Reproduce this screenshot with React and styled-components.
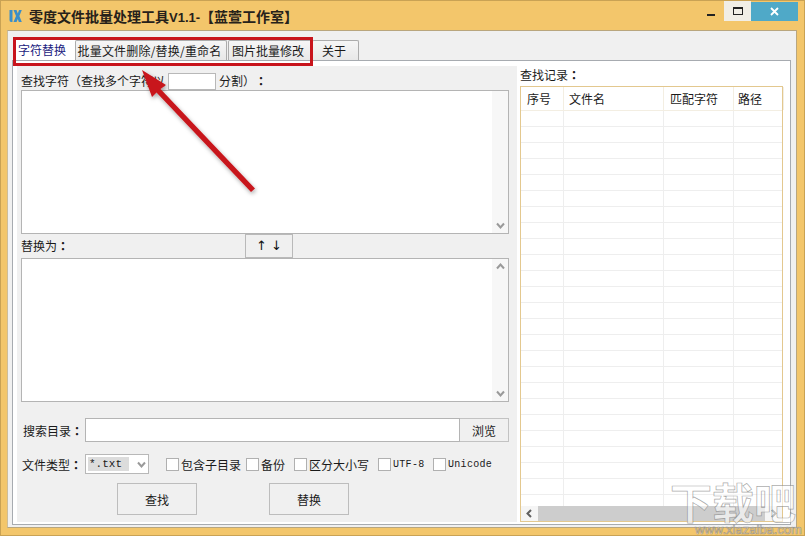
import React from "react";
import styled, { createGlobalStyle } from "styled-components";

const Global = createGlobalStyle`
  html, body { margin: 0; padding: 0; background: #f3c66b; }
  * { box-sizing: border-box; }
  body { font-family: "Noto Sans CJK SC", "Liberation Sans", sans-serif; font-size: 12px; color: #1a1a1a; }
`;

const Frame = styled.div`
  position: relative;
  width: 805px;
  height: 536px;
  overflow: hidden;
  display: flex;
  flex-direction: column;
  background: #f3c66b;
  border: 1px solid #c9a254;
`;
const TitleBar = styled.div`
  flex: 0 0 29px;
  display: flex;
  align-items: flex-start;
  padding-left: 8px;
`;
const Logo = styled.svg`
  width: 13px;
  height: 14px;
  margin-top: 8px;
`;
const Title = styled.div`
  margin: 5px 0 0 7px;
  font-size: 14px;
  line-height: 20px;
  font-weight: 700;
  color: #26211a;
  white-space: nowrap;
`;
const Latin = styled.span`
  font-family: "Liberation Sans", sans-serif;
  font-size: 13px;
`;
const WinButtons = styled.div`
  margin-left: auto;
  margin-right: 6px;
  display: flex;
  align-items: flex-start;
`;
const WinBtn = styled.div`
  width: ${(p) => p.$w}px;
  height: ${(p) => p.$h}px;
  margin-top: ${(p) => 21 - p.$h - 1}px;
  background: ${(p) => p.$bg};
  display: flex;
  align-items: center;
  justify-content: center;
`;
const MinGlyph = styled.div`
  width: 8px;
  height: 2px;
  background: #222;
  margin-top: 8px;
`;
const MaxGlyph = styled.div`
  width: 10px;
  height: 8px;
  border: 1px solid #222;
  border-top-width: 2px;
`;
const Client = styled.div`
  flex: 1;
  min-height: 0;
  margin: 0 7px 7px 6px;
  background: #f0f0f0;
  border: 1px solid #b9a67e;
  border-left-color: #cdbd99;
  padding: 9px 5px 2px 4px;
  display: flex;
  flex-direction: column;
`;
const TabBar = styled.div`
  flex: 0 0 20px;
  min-height: 0;
  display: flex;
  align-items: flex-end;
  padding-left: 1px;
`;
const Tab = styled.div`
  height: ${(p) => (p.$active ? 22 : 20)}px;
  width: ${(p) => p.$w}px;
  margin-right: ${(p) => p.$gap || 0}px;
  padding-right: ${(p) => p.$shift || 0}px;
  display: flex;
  align-items: center;
  justify-content: center;
  flex: 0 0 auto;
  background: ${(p) => (p.$active ? "#fff" : "linear-gradient(#f6f6f6, #e8e8e8)")};
  border: ${(p) => (p.$active ? "none" : "1px solid #acacac")};
  border-bottom: none;
  border-radius: 2px 2px 0 0;
  color: ${(p) => (p.$active ? "#1c1c80" : "#1a1a1a")};
  font-size: 12px;
  letter-spacing: ${(p) => p.$track || 0}px;
  white-space: nowrap;
`;
const TabPanel = styled.div`
  flex: 1;
  min-height: 0;
  display: flex;
  background: #fff;
  border: 1px solid #a7abb0;
  padding: 5px 0 2px 4px;
`;
const LeftPanel = styled.div`
  width: 500px;
  background: #f0f0f0;
  padding: 0 8px 0 4px;
  display: flex;
  flex-direction: column;
`;
const FindRow = styled.div`
  flex: 0 0 24px;
  display: flex;
  align-items: flex-end;
  line-height: 18px;
  white-space: nowrap;
`;
const Wide = styled.span`
  font-family: "Noto Sans CJK TC", "Noto Sans CJK SC", sans-serif;
  font-weight: 700;
`;
const Paren = styled.span`
  display: inline-block;
  width: 12px;
  text-align: right;
`;
const SepInput = styled.div`
  width: 48px;
  height: 17px;
  margin: 0 3px;
  background: #fff;
  border: 1px solid #b8b8b8;
`;
const TextBox = styled.div`
  flex: 0 0 144px;
  background: #fff;
  border: 1px solid #b4b4b4;
  display: flex;
  justify-content: flex-end;
`;
const VScroll = styled.div`
  width: 16px;
  background: #f7f7f7;
  display: flex;
  flex-direction: column;
  justify-content: space-between;
  align-items: center;
  padding: 3px 0;
`;
const Chevron = styled.svg`
  width: 9px;
  height: 9px;
  display: block;
`;
const MidRow = styled.div`
  flex: 0 0 24px;
  display: flex;
  align-items: center;
  line-height: 18px;
`;
const MidLabel = styled.div`
  width: 224px;
`;
const SwapBtn = styled.div`
  width: 48px;
  height: 24px;
  border: 1px solid #b9b9b9;
  background: #f0f0f0;
  display: flex;
  align-items: center;
  justify-content: center;
  gap: 4px;
  font-family: "DejaVu Sans", sans-serif;
  font-size: 13px;
  color: #111;
`;
const DirRow = styled.div`
  margin-top: 16px;
  flex: 0 0 24px;
  display: flex;
  align-items: center;
  padding-left: 2px;
`;
const FieldLabel = styled.div`
  width: 62px;
  white-space: nowrap;
`;
const DirInput = styled.div`
  flex: 1;
  height: 24px;
  background: #fff;
  border: 1px solid #b4b4b4;
`;
const BrowseBtn = styled.div`
  width: 49px;
  height: 24px;
  border: 1px solid #c2c2c2;
  border-left: none;
  display: flex;
  align-items: center;
  justify-content: center;
`;
const TypeRow = styled.div`
  margin-top: 12px;
  flex: 0 0 20px;
  display: flex;
  align-items: center;
  padding-left: 1px;
`;
const TypeSelect = styled.div`
  width: 64px;
  height: 20px;
  margin-left: 1px;
  margin-right: 17px;
  background: #fff;
  border: 1px solid #b8b8b8;
  padding: 2px;
  display: flex;
  align-items: center;
  justify-content: space-between;
`;
const SelectText = styled.div`
  width: 41px;
  height: 14px;
  background: #dcdcdc;
  font-family: "Liberation Mono", monospace;
  font-size: 11px;
  line-height: 14px;
  padding-left: 1px;
  white-space: nowrap;
`;
const Check = styled.label`
  display: flex;
  align-items: center;
  width: ${(p) => p.$w}px;
  white-space: nowrap;
  font-family: ${(p) => (p.$mono ? '"Liberation Mono", monospace' : "inherit")};
  font-size: ${(p) => (p.$mono ? "10px" : "12px")};
  letter-spacing: ${(p) => (p.$mono ? "0.3px" : "0")};
`;
const Box = styled.span`
  flex: 0 0 13px;
  height: 13px;
  margin-right: 2px;
  background: #fff;
  border: 1px solid #b0b0b0;
`;
const ActionRow = styled.div`
  margin-top: 9px;
  display: flex;
  gap: 72px;
  padding-left: 96px;
`;
const ActionBtn = styled.div`
  width: 80px;
  height: 32px;
  border: 1px solid #bdbdbd;
  display: flex;
  align-items: center;
  justify-content: center;
`;
const RightPanel = styled.div`
  flex: 1;
  min-height: 0;
  padding: 0 7px 0 3px;
  display: flex;
  flex-direction: column;
  min-width: 0;
`;
const RecordLabel = styled.div`
  flex: 0 0 20px;
  line-height: 17px;
`;
const Table = styled.div`
  flex: 1;
  min-height: 0;
  border: 1px solid #e3c88f;
  background: #fff;
  display: flex;
  flex-direction: column;
`;
const Head = styled.div`
  flex: 0 0 24px;
  display: flex;
  border-bottom: 1px solid #f3eee2;
`;
const HeadCell = styled.div`
  flex: 0 0 ${(p) => p.$w}px;
  border-right: 1px solid #f3eee2;
  padding-left: ${(p) => p.$pad}px;
  line-height: 23px;
  white-space: nowrap;
`;
const Rows = styled.div`
  flex: 1;
  min-height: 0;
  overflow: hidden;
`;
const Row = styled.div`
  height: 16px;
  display: flex;
  border-bottom: 1px solid #eeeeee;
`;
const Cell = styled.div`
  flex: 0 0 ${(p) => p.$w}px;
  border-right: 1px solid #eeeeee;
`;
const HScroll = styled.div`
  flex: 0 0 15px;
  display: flex;
  align-items: stretch;
  background: #f5f5f5;
`;
const ScrollEnd = styled.div`
  flex: 0 0 17px;
  display: flex;
  justify-content: center;
  align-items: center;
`;
const Thumb = styled.div`
  flex: 1;
  background: #cdcdcd;
`;
const RedBox = styled.div`
  position: absolute;
  left: 12px;
  top: 36px;
  width: 300px;
  height: 29px;
  border: 3px solid #c8141c;
`;
const Overlay = styled.svg`
  position: absolute;
  left: -1px;
  top: -1px;
  width: 805px;
  height: 536px;
  pointer-events: none;
`;
const Watermark = styled.div`
  position: absolute;
  left: 669px;
  top: 477px;
  width: 134px;
  height: 58px;
  color: rgba(255, 255, 255, 0.6);
  -webkit-text-stroke: 0.7px rgba(110, 110, 110, 0.6);
`;
const WmTitle = styled.div`
  font-size: 42px;
  line-height: 45px;
  height: 45px;
  font-weight: 700;
  white-space: nowrap;
`;
const WmUrl = styled.div`
  font-family: "Liberation Sans", sans-serif;
  font-size: 13px;
  line-height: 13px;
  padding-left: 25px;
  white-space: nowrap;
`;

const Down = () => (
  <Chevron viewBox="0 0 9 9"><path d="M1 2.5 L4.5 6.5 L8 2.5" fill="none" stroke="#9a9a9a" strokeWidth="2" /></Chevron>
);
const Up = () => (
  <Chevron viewBox="0 0 9 9"><path d="M1 6.5 L4.5 2.5 L8 6.5" fill="none" stroke="#9a9a9a" strokeWidth="2" /></Chevron>
);
const Side = ({ d }) => (
  <Chevron viewBox="0 0 9 9"><path d={d} fill="none" stroke="#606060" strokeWidth="2" /></Chevron>
);

const cols = [43, 100, 70];
const rows = Array.from({ length: 26 }, (_, i) => i);

export default function App() {
  return (
    <>
      <Global />
      <Frame>
        <TitleBar>
          <Logo viewBox="0 0 13 14">
            <path d="M0.5 1 H3.5 V13 H2 Q0.5 13 0.5 11 Z" fill="#3a8ec9" />
            <path d="M4.5 1 H7.5 L8.8 4.4 L10 1 H12.8 L10.4 7 L12.8 13 H9.8 L8.8 10 L7.6 13 H4.5 L7 7 Z" fill="#3a8ec9" />
          </Logo>
          <Title>零度文件批量处理工具<Latin>V1.1-</Latin>【蓝萱工作室】</Title>
          <WinButtons>
            <WinBtn $w={26} $h={20} $bg="transparent"><MinGlyph /></WinBtn>
            <WinBtn $w={27} $h={20} $bg="#f1eee6"><MaxGlyph /></WinBtn>
            <WinBtn $w={47} $h={19} $bg="#4fa9c8">
              <svg width="9" height="9" viewBox="0 0 9 9"><path d="M1 1 L8 8 M8 1 L1 8" stroke="#fff" strokeWidth="1.8" /></svg>
            </WinBtn>
          </WinButtons>
        </TitleBar>
        <Client>
          <TabBar>
            <Tab $active $w={62} $shift={4}>字符替换</Tab>
            <Tab $w={152} $gap={1} $shift={3} $track={0.2}>批量文件删除/替换/重命名</Tab>
            <Tab $w={84} $shift={4}>图片批量修改</Tab>
            <Tab $w={47} $shift={3}>关于</Tab>
          </TabBar>
          <TabPanel>
            <LeftPanel>
              <FindRow>查找字符<Paren>（</Paren>查找多个字符以<SepInput />分割）<Wide>：</Wide></FindRow>
              <TextBox><VScroll><span /><Down /></VScroll></TextBox>
              <MidRow>
                <MidLabel>替换为<Wide>：</Wide></MidLabel>
                <SwapBtn><span>↑</span><span>↓</span></SwapBtn>
              </MidRow>
              <TextBox><VScroll><Up /><Down /></VScroll></TextBox>
              <DirRow>
                <FieldLabel>搜索目录<Wide>：</Wide></FieldLabel>
                <DirInput />
                <BrowseBtn>浏览</BrowseBtn>
              </DirRow>
              <TypeRow>
                <FieldLabel>文件类型<Wide>：</Wide></FieldLabel>
                <TypeSelect>
                  <SelectText>*.txt</SelectText>
                  <Down />
                </TypeSelect>
                <Check $w={80}><Box />包含子目录</Check>
                <Check $w={48}><Box />备份</Check>
                <Check $w={84}><Box />区分大小写</Check>
                <Check $w={55} $mono><Box />UTF-8</Check>
                <Check $w={62} $mono><Box />Unicode</Check>
              </TypeRow>
              <ActionRow>
                <ActionBtn>查找</ActionBtn>
                <ActionBtn>替换</ActionBtn>
              </ActionRow>
            </LeftPanel>
            <RightPanel>
              <RecordLabel>查找记录<Wide>：</Wide></RecordLabel>
              <Table>
                <Head>
                  <HeadCell $w={cols[0]} $pad={6}>序号</HeadCell>
                  <HeadCell $w={cols[1]} $pad={5}>文件名</HeadCell>
                  <HeadCell $w={cols[2]} $pad={6}>匹配字符</HeadCell>
                  <HeadCell $w={50} $pad={4}>路径</HeadCell>
                </Head>
                <Rows>
                  {rows.map((r) => (
                    <Row key={r}>
                      {cols.map((w, i) => <Cell key={i} $w={w} />)}
                    </Row>
                  ))}
                </Rows>
                <HScroll>
                  <ScrollEnd><Side d="M6 1 L2.5 4.5 L6 8" /></ScrollEnd>
                  <Thumb />
                  <ScrollEnd><Side d="M3 1 L6.5 4.5 L3 8" /></ScrollEnd>
                </HScroll>
              </Table>
            </RightPanel>
          </TabPanel>
        </Client>
        <Watermark>
          <WmTitle>下载吧</WmTitle>
          <WmUrl>www.xiazaiba.com</WmUrl>
        </Watermark>
        <RedBox />
        <Overlay viewBox="0 0 805 536">
          <defs>
            <filter id="sh" x="-20%" y="-20%" width="140%" height="140%">
              <feDropShadow dx="1" dy="2" stdDeviation="2" floodColor="#000" floodOpacity="0.35" />
            </filter>
          </defs>
          <path
            d="M142 70 L166 85 L160.5 89 L255 188.5 L251 192 L156.5 92.5 L152 97 Z"
            fill="#c8171c"
            filter="url(#sh)"
          />
        </Overlay>
      </Frame>
    </>
  );
}
